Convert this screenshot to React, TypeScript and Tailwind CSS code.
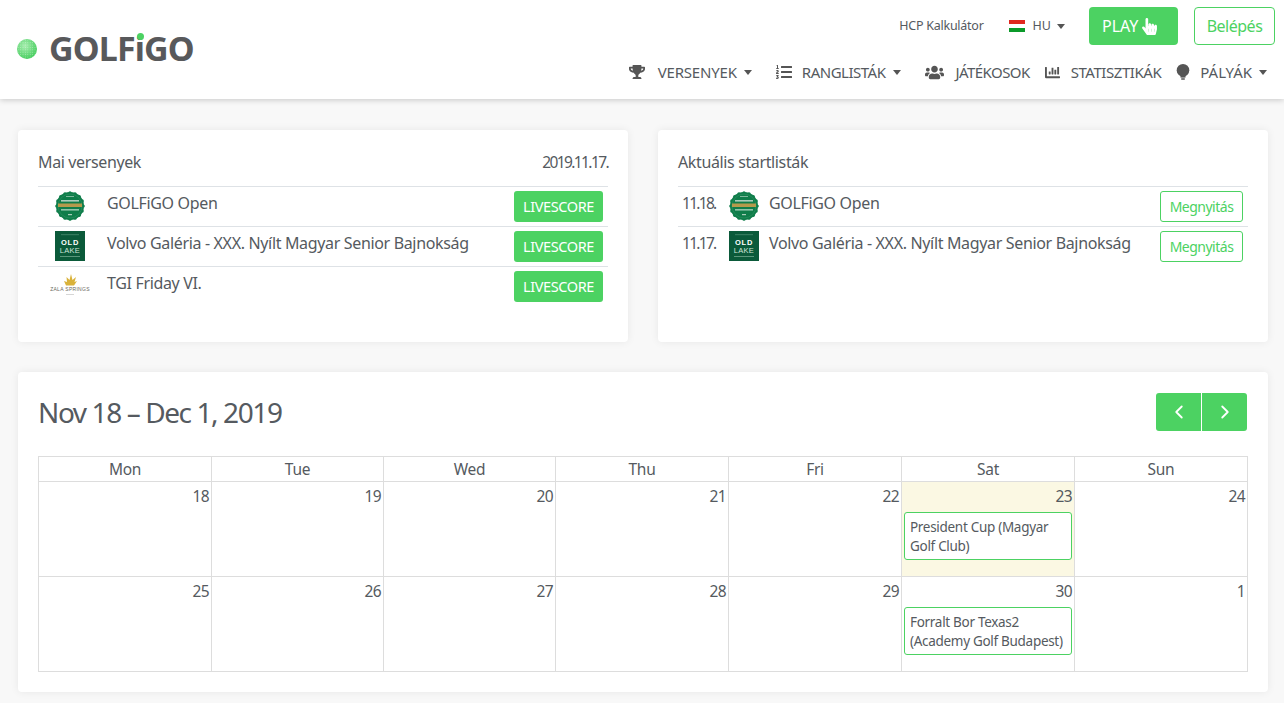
import { FaTrophy, FaListOl, FaUsers, FaChartBar, FaHandPointer } from "react-icons/fa";
import { LuChevronLeft, LuChevronRight } from "react-icons/lu";

const font = { fontFamily: '"Noto Sans", sans-serif' };

function Caret() {
  return <span className="ml-[6px] inline-block h-0 w-0 border-x-[4.5px] border-t-[5px] border-x-transparent border-t-[#555]" />;
}

function Badge() {
  const bumps = Array.from({ length: 16 }, (_, i) => (i / 16) * Math.PI * 2);
  return (
    <svg width="30" height="30" viewBox="0 0 30 30">
      {bumps.map((a) => (
        <circle key={a} cx={15 + 13.2 * Math.cos(a)} cy={15 + 13.2 * Math.sin(a)} r="1.6" fill="#0f7d4a" />
      ))}
      <circle cx="15" cy="15" r="14" fill="#0f7d4a" />
      <circle cx="15" cy="15" r="12" fill="none" stroke="#3f9c70" strokeWidth="0.4" />
      <rect x="6" y="9" width="18" height="1.6" fill="#a9cdb9" />
      <rect x="3" y="12.5" width="24" height="3.5" fill="#b59a4c" />
      <rect x="6" y="18" width="18" height="1.6" fill="#8fc4a8" />
      <rect x="11" y="5" width="8" height="1" fill="#7fb89c" />
      <rect x="13" y="23" width="4" height="1.2" fill="#a9cdb9" />
    </svg>
  );
}

function OldLake() {
  return (
    <svg width="30" height="30" viewBox="0 0 30 30">
      <rect width="30" height="30" fill="#0b5a3a" />
      <rect x="6" y="3.5" width="18" height="0.6" fill="#5f9a80" />
      <text x="15" y="13.5" textAnchor="middle" fontSize="7.5" fontWeight="700" fill="#fff" fontFamily="Liberation Sans" letterSpacing="0.8">OLD</text>
      <text x="15" y="21.5" textAnchor="middle" fontSize="7.5" fill="#cfe3d8" fontFamily="Liberation Sans" letterSpacing="0.3">LAKE</text>
      <rect x="5" y="25" width="20" height="0.8" fill="#6fa58c" />
    </svg>
  );
}

function Zala() {
  return (
    <svg width="48" height="30" viewBox="0 0 48 30">
      <path d="M25 3 L26.5 9 L30 6 L28.5 11 L31 10 L28 14.5 L20 14.5 L18 10 L21 11 L20.5 6 L23.5 9 Z" fill="#d9b23a" />
      <text x="24" y="20" textAnchor="middle" fontSize="5" fill="#6a6a60" fontFamily="Liberation Sans" letterSpacing="0.3">ZALA SPRINGS</text>
      <rect x="20" y="23" width="8" height="0.6" fill="#bbb" />
    </svg>
  );
}

function Row({ logo, date, name, btn }: { logo: React.ReactNode; date?: string; name: string; btn: "live" | "open" }) {
  return (
    <div className="flex h-10 items-start border-t border-[#dee2e6] pt-1 pb-1">
      {date ? (
        <>
          <span className="ml-[4px] mt-[2px] w-[47px] text-[15.5px] leading-5 tracking-[-1.7px]">{date}</span>
          <span className="flex w-[40px] justify-start">{logo}</span>
        </>
      ) : (
        <span className="flex h-[30px] w-[69px] justify-center pr-[7px] pl-[2px]">{logo}</span>
      )}
      <span className="mt-[2px] flex-1 text-[16px] leading-5 tracking-[-0.34px]">{name}</span>
      {btn === "live" ? (
        <button className="mr-[5px] flex h-[31px] w-[89px] items-center justify-center rounded-[3px] bg-[#4cd262] text-[14.5px] tracking-[-0.4px] text-white">LIVESCORE</button>
      ) : (
        <button className="mr-[5px] flex h-[31px] w-[83px] items-center justify-center rounded-[3px] border border-[#4cd262] text-[14px] tracking-[-0.5px] text-[#4cd262]">Megnyitás</button>
      )}
    </div>
  );
}

function Card({ children, className = "" }: { children: React.ReactNode; className?: string }) {
  return <div className={`rounded-[4px] bg-white shadow-[0_0_8px_rgba(0,0,0,0.07)] ${className}`}>{children}</div>;
}

const Nav = ({ icon, label, caret, cls, track }: { icon: React.ReactNode; label: string; caret?: boolean; cls: string; track: string }) => (
  <span className={`flex items-center ${cls}`}>
    {icon}
    <span className={`text-[15px] ${track}`}>{label}</span>
    {caret && <Caret />}
  </span>
);

const weeks = [
  ["18", "19", "20", "21", "22", "23", "24"],
  ["25", "26", "27", "28", "29", "30", "1"],
];
const events: Record<string, string[]> = {
  "23": ["President Cup (Magyar", "Golf Club)"],
  "30": ["Forralt Bor Texas2", "(Academy Golf Budapest)"],
};
const cols = "grid grid-cols-[173px_172px_172px_173px_173px_173px_173px]";

export default function App() {
  return (
    <div style={font} className="min-h-[703px] overflow-hidden bg-[#f8f8f8] text-[#555a60]">
      <header className="flex h-[99px] items-start justify-between bg-white shadow-[0_1px_6px_rgba(0,0,0,0.2)]">
        <div className="ml-[17px] mt-[30px] flex items-center">
          <svg width="20" height="20" viewBox="0 0 20 20" className="mt-[2px]">
            <defs>
              <radialGradient id="b" cx="0.4" cy="0.35" r="0.7">
                <stop offset="0" stopColor="#a8eeb0" />
                <stop offset="1" stopColor="#3fcb58" />
              </radialGradient>
              <pattern id="d" width="2.4" height="2.4" patternUnits="userSpaceOnUse">
                <circle cx="1.2" cy="1.2" r="0.5" fill="#fff" fillOpacity="0.45" />
              </pattern>
            </defs>
            <circle cx="10" cy="10" r="10" fill="url(#b)" />
            <circle cx="10" cy="10" r="10" fill="url(#d)" />
          </svg>
          <span className="relative ml-[12px] text-[34px] font-bold leading-9 tracking-[-0.85px] text-[#58595b]">
            GOLFiGO
            <span className="absolute left-[88px] top-[3px] h-[7px] w-[7px] rounded-full bg-[#4cd262]" />
          </span>
        </div>
        <div className="flex flex-col items-end">
          <div className="mr-[9px] mt-[7px] flex h-[38px] items-center">
            <span className="mr-[25px] text-[12.5px] tracking-[-0.25px]">HCP Kalkulátor</span>
            <span className="mr-[8px] flex h-[12px] w-[16px] flex-col">
              <span className="h-1 bg-[#e0281f]" />
              <span className="h-1 bg-white" />
              <span className="h-1 bg-[#0b9a2a]" />
            </span>
            <span className="text-[12.5px]">HU</span>
            <Caret />
            <button className="ml-[24px] flex h-[38px] w-[89px] items-center rounded-[4px] bg-[#4cd262] pl-[13px] text-[16px] tracking-[0px] text-white">
              PLAY
              <FaHandPointer className="ml-[3px] text-[17px]" />
            </button>
            <button className="ml-[16px] flex h-[38px] w-[81px] items-center justify-center rounded-[4px] border border-[#4cd262] text-[16px] tracking-[-0.5px] text-[#4cd262]">Belépés</button>
          </div>
          <nav className="mr-[17px] mt-[17px] flex h-[20px] items-center">
            <Nav cls="mr-[24px]" track="mr-px tracking-[-0.17px]" icon={<FaTrophy className="mr-[13px] text-[16px] text-[#555]" />} label="VERSENYEK" caret />
            <Nav cls="mr-[24px]" track="mr-[2px] tracking-[-0.5px]" icon={<FaListOl className="mr-[10px] text-[16px] text-[#555]" />} label="RANGLISTÁK" caret />
            <Nav cls="mr-[15px]" track="tracking-[-0.55px]" icon={<FaUsers className="mr-[11px] text-[19px] text-[#555]" />} label="JÁTÉKOSOK" />
            <Nav cls="mr-[15px]" track="tracking-[-0.45px]" icon={<FaChartBar className="mr-[11px] text-[15px] text-[#555]" />} label="STATISZTIKÁK" />
            <Nav
              cls=""
              track="mr-px tracking-[0px]"
              icon={
                <svg width="14" height="16" viewBox="0 0 14 16" className="mr-[10px]" fill="#555">
                  <circle cx="7" cy="6.3" r="6.3" />
                  <rect x="4.5" y="12" width="5" height="1.6" />
                  <rect x="5" y="14.2" width="4" height="1.6" rx="0.8" />
                </svg>
              }
              label="PÁLYÁK"
              caret
            />
          </nav>
        </div>
      </header>

      <main className="pl-[18px] pr-[16px]">
        <div className="mt-[31px] grid grid-cols-2 gap-[30px]">
          <Card className="h-[212px] px-5 pt-[20px]">
            <div className="flex h-[36px] justify-between text-[16px] leading-6 tracking-[-0.37px]">
              <span>Mai versenyek</span>
              <span className="text-[15.5px] tracking-[-1.6px]">2019.11.17.</span>
            </div>
            <Row logo={<Badge />} name="GOLFiGO Open" btn="live" />
            <Row logo={<OldLake />} name="Volvo Galéria - XXX. Nyílt Magyar Senior Bajnokság" btn="live" />
            <Row logo={<Zala />} name="TGI Friday VI." btn="live" />
          </Card>
          <Card className="h-[212px] px-5 pt-[20px]">
            <div className="h-[36px] text-[16px] leading-6 tracking-[-0.37px]">Aktuális startlisták</div>
            <Row date="11.18." logo={<Badge />} name="GOLFiGO Open" btn="open" />
            <Row date="11.17." logo={<OldLake />} name="Volvo Galéria - XXX. Nyílt Magyar Senior Bajnokság" btn="open" />
          </Card>
        </div>

        <Card className="mt-[30px] h-[320px] px-5 pt-[21px]">
          <div className="flex h-[38px] items-center justify-between">
            <h2 className="text-[28px] tracking-[-1.4px]">Nov 18 – Dec 1, 2019</h2>
            <div className="mr-px flex h-[38px] text-white">
              <button className="flex w-[45px] items-center justify-center rounded-l-[3px] bg-[#4cd262]"><LuChevronLeft size={22} /></button>
              <button className="ml-px flex w-[45px] items-center justify-center rounded-r-[3px] bg-[#4cd262]"><LuChevronRight size={22} /></button>
            </div>
          </div>
          <div className="mt-[25px] w-[1210px] border-l border-t border-[#ddd]">
            <div className={`${cols} h-[25px]`}>
              {["Mon", "Tue", "Wed", "Thu", "Fri", "Sat", "Sun"].map((d) => (
                <div key={d} className="border-b border-r border-[#ddd] text-center text-[15.5px] leading-6 tracking-[-0.3px]">{d}</div>
              ))}
            </div>
            {weeks.map((w) => (
              <div key={w[0]} className={`${cols} h-[95px]`}>
                {w.map((n) => (
                  <div key={n} className={`border-b border-r border-[#ddd] text-right ${n === "23" ? "bg-[#fbf8e3]" : ""}`}>
                    <div className="pr-[2px] pt-[2px] text-[15.5px] leading-6 tracking-[-0.6px]">{n}</div>
                    {events[n] && (
                      <div className="mx-[2px] mt-[4px] h-[48px] rounded-[3px] border border-[#4cd262] bg-white pl-[5px] pt-[5px] text-left text-[13.5px] leading-[19px] tracking-[-0.3px]">
                        {events[n].map((l) => <div key={l} className="whitespace-nowrap">{l}</div>)}
                      </div>
                    )}
                  </div>
                ))}
              </div>
            ))}
          </div>
        </Card>
      </main>
    </div>
  );
}
